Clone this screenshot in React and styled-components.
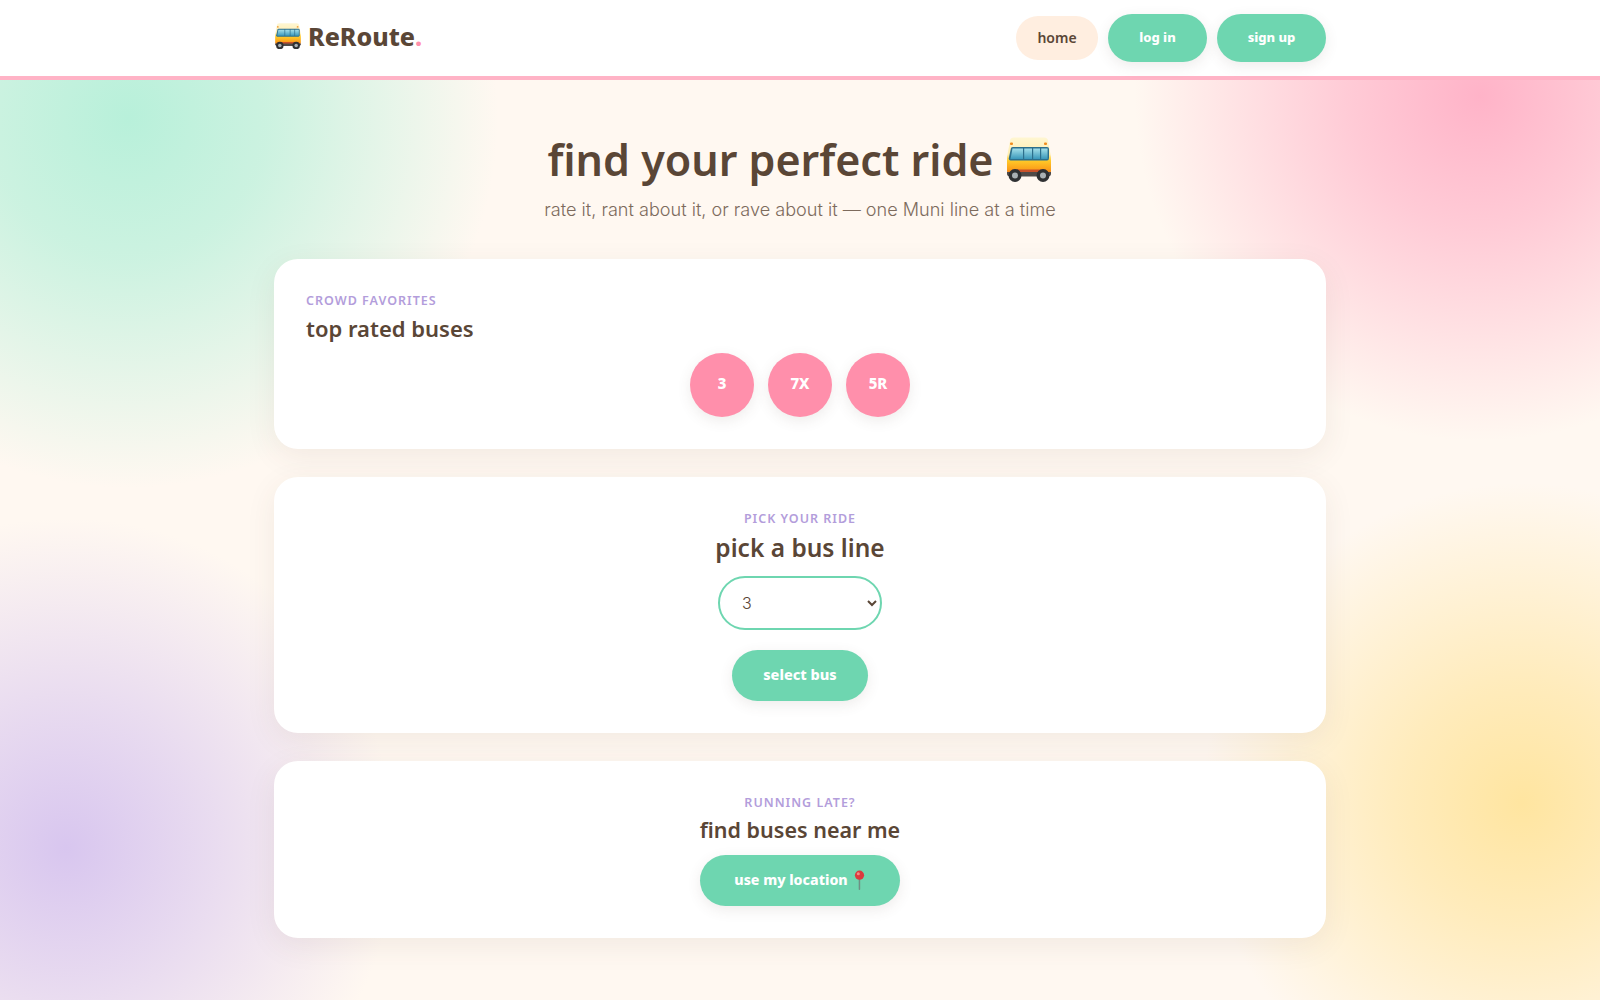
import React, { useId } from "react";
import styled, { createGlobalStyle } from "styled-components";

const Global = createGlobalStyle`
  html, body { margin: 0; padding: 0; }
  body {
    min-height: 1000px;
    font-family: "Noto Sans", sans-serif;
    color: #5a4636;
    background-color: #fff8f1;
    background-image:
      radial-gradient(circle at 128px 118px, #b8f0da 0, rgba(184,240,218,.72) 140px, rgba(184,240,218,0) 370px),
      radial-gradient(circle at 1480px 96px, #ffb3c8 0, rgba(255,179,200,.66) 130px, rgba(255,179,200,0) 345px),
      radial-gradient(circle at 66px 848px, #d8c6ef 0, rgba(216,198,239,.62) 130px, rgba(216,198,239,.34) 220px, rgba(216,198,239,0) 330px),
      radial-gradient(circle at 1522px 803px, #ffe5a0 0, rgba(255,229,160,.66) 120px, rgba(255,229,160,.36) 210px, rgba(255,229,160,0) 320px);
  }
`;

const Header = styled.header`
  height: 76px;
  background: #fff;
  border-bottom: 4px solid #ffb3c6;
  display: flex;
  justify-content: center;
`;
const HeaderInner = styled.div`
  width: 1052px;
  display: flex;
  align-items: center;
  justify-content: space-between;
`;
const Logo = styled.div`
  font-size: 25px;
  font-weight: 800;
  color: #5a4636;
  display: flex;
  align-items: center;
  gap: 6px;
  margin-top: -4px;
`;
const Dot = styled.span`color: #ff8fab;`;
const Nav = styled.nav`
  display: flex;
  align-items: center;
  gap: 10px;
`;
const HomeLink = styled.a`
  height: 44px;
  width: 82px;
  border-radius: 22px;
  background: #ffeee0;
  color: #5a4636;
  font-size: 14px;
  font-weight: 600;
  padding-bottom: 1px;
  box-sizing: border-box;
  display: flex;
  align-items: center;
  justify-content: center;
`;
const Pill = styled.button`
  border: 0;
  padding: 0 0 3px;
  background: #6ed6b0;
  color: #fff;
  font-family: inherit;
  font-weight: 800;
  border-radius: 999px;
  box-shadow: 0 4px 14px rgba(90, 70, 54, 0.1);
  font-size: ${p => p.$size || 14.5}px;
  width: ${p => p.$w}px;
  height: ${p => p.$h}px;
  display: flex;
  align-items: center;
  justify-content: center;
  gap: 5px;
`;
const Main = styled.main`
  width: 1052px;
  margin: 0 auto;
  padding-top: 46px;
  display: flex;
  flex-direction: column;
`;
const Hero = styled.div`
  text-align: center;
  margin-bottom: 37px;
`;
const Title = styled.h1`
  margin: 0;
  padding-top: 2px;
  font-size: 43px;
  line-height: 64px;
  font-weight: 600;
  color: #5a4636;
  display: flex;
  align-items: center;
  justify-content: center;
  gap: 11px;
`;
const Sub = styled.p`
  margin: 4px 0 0;
  font-family: "Inter", sans-serif;
  font-weight: 300;
  font-size: 18.1px;
  line-height: 26px;
  color: #7d6b5d;
`;
const Card = styled.section`
  background: #fff;
  border-radius: 24px;
  box-shadow: 0 8px 30px rgba(90, 70, 54, 0.08);
  padding: 32px;
  margin-bottom: 28px;
  text-align: ${p => (p.$left ? "left" : "center")};
  display: flex;
  flex-direction: column;
  align-items: ${p => (p.$left ? "flex-start" : "center")};
`;
const Eyebrow = styled.div`
  font-size: 12.5px;
  line-height: 18px;
  padding-top: 1px;
  font-weight: 600;
  letter-spacing: 1px;
  text-transform: uppercase;
  color: #b39ddb;
`;
const Heading = styled.h2`
  margin: 2px 0 0;
  font-size: 22px;
  line-height: 32px;
  font-weight: 600;
  color: #5a4636;
`;
const LargeHeading = styled(Heading)`
  margin-top: 1px;
  font-size: 24.5px;
  line-height: 38px;
`;
const NearHeading = styled(Heading)`
  font-size: 21.5px;
`;
const Badges = styled.div`
  align-self: stretch;
  display: flex;
  justify-content: center;
  gap: 14px;
  margin-top: 9px;
`;
const Badge = styled.div`
  width: 64px;
  height: 64px;
  border-radius: 50%;
  background: #ff8fab;
  color: #fff;
  font-weight: 800;
  font-size: 15px;
  padding-bottom: 4px;
  box-sizing: border-box;
  display: flex;
  align-items: center;
  justify-content: center;
  box-shadow: 0 4px 14px rgba(90, 70, 54, 0.1);
`;
const Select = styled.select`
  width: 164px;
  height: 54px;
  margin: 9px 0 20px;
  border: 2px solid #6ed6b0;
  border-radius: 27px;
  background: #fff;
  padding: 0 18px;
  font-family: "Inter", sans-serif;
  font-weight: 300;
  font-size: 16px;
  color: #5a4636;
`;
const BusSvg = styled.svg`
  width: ${p => p.$w}px;
  flex: none;
  display: block;
`;
const PinSvg = styled.svg`
  width: 13px;
  height: 20px;
  flex: none;
  margin-top: 2px;
`;
const NearButton = styled(Pill)`
  margin-top: 9px;
  font-size: 14.2px;
`;

function Bus({ w }) {
  const id = useId().replace(/[^a-zA-Z0-9]/g, "");
  return (
    <BusSvg $w={w} viewBox="6 4 48 46" aria-hidden="true">
      <defs>
        <linearGradient id={id + "b"} x1="0" y1="0" x2="0" y2="1">
          <stop offset="0" stopColor="#fff6d2" />
          <stop offset="0.45" stopColor="#ffeeb0" />
          <stop offset="0.62" stopColor="#ffc928" />
          <stop offset="0.85" stopColor="#fb9f1a" />
          <stop offset="1" stopColor="#e8621f" />
        </linearGradient>
        <linearGradient id={id + "g"} x1="0" y1="0" x2="0" y2="1">
          <stop offset="0" stopColor="#a3dfe9" />
          <stop offset="1" stopColor="#3a98bb" />
        </linearGradient>
      </defs>
      <path d="M11 8 Q11 4.5 15 4.5 H45 Q49 4.5 49 8 L52 24 V38 Q52 42 48 42 H12 Q8 42 8 38 V24 Z" fill={`url(#${id}b)`} />
      <path d="M12 15 Q12.5 14 14 14 H48 Q50 14 50 16 V25 Q50 27.5 48 27.5 H11.5 Q9.5 27.5 9.8 25 Z" fill="#2d6f8c" />
      <path d="M13.5 15.5 H24 V26 H11.5 Z M25.2 15.5 H33 V26 H25.2 Z M34.2 15.5 H41 V26 H34.2 Z M42.2 15.5 H48.6 V26 H42.2 Z" fill={`url(#${id}g)`} />
      <rect x="11" y="9.5" width="3" height="2.4" rx="1" fill="#f08c1e" />
      <rect x="45" y="9.5" width="3" height="2.4" rx="1" fill="#f08c1e" />
      <rect x="12" y="36.5" width="36" height="6" rx="2" fill="#c9522a" />
      <path d="M8 39 H52 V41 Q52 43.5 48 43.5 H12 Q8 43.5 8 41 Z" fill="#4f4a48" />
      <circle cx="16" cy="42.5" r="6.5" fill="#2f3133" />
      <circle cx="16" cy="42.5" r="3" fill="#a9b0b3" />
      <circle cx="44" cy="42.5" r="6.5" fill="#2f3133" />
      <circle cx="44" cy="42.5" r="3" fill="#a9b0b3" />
    </BusSvg>
  );
}

function Pin() {
  return (
    <PinSvg viewBox="0 0 13 20" aria-hidden="true">
      <rect x="5.7" y="7" width="1.5" height="13" rx="0.7" fill="#6f8f84" />
      <circle cx="6.5" cy="5.2" r="4.6" fill="#dc3a3f" />
      <circle cx="5.3" cy="3.8" r="1.5" fill="#f58a86" />
    </PinSvg>
  );
}

export default function App() {
  return (
    <>
      <Global />
      <Header>
        <HeaderInner>
          <Logo><Bus w={28} /> <span>ReRoute<Dot>.</Dot></span></Logo>
          <Nav>
            <HomeLink>home</HomeLink>
            <Pill $w={99} $h={48} $size={13}>log in</Pill>
            <Pill $w={109} $h={48} $size={13}>sign up</Pill>
          </Nav>
        </HeaderInner>
      </Header>
      <Main>
        <Hero>
          <Title>find your perfect ride <Bus w={48} /></Title>
          <Sub>rate it, rant about it, or rave about it — one Muni line at a time</Sub>
        </Hero>
        <Card $left>
          <Eyebrow>crowd favorites</Eyebrow>
          <Heading>top rated buses</Heading>
          <Badges>
            <Badge>3</Badge>
            <Badge>7X</Badge>
            <Badge>5R</Badge>
          </Badges>
        </Card>
        <Card>
          <Eyebrow>pick your ride</Eyebrow>
          <LargeHeading>pick a bus line</LargeHeading>
          <Select defaultValue="3">
            <option>3</option>
            <option>7X</option>
            <option>5R</option>
          </Select>
          <Pill $w={136} $h={51}>select bus</Pill>
        </Card>
        <Card>
          <Eyebrow>running late?</Eyebrow>
          <NearHeading>find buses near me</NearHeading>
          <NearButton $w={200} $h={51}>use my location <Pin /></NearButton>
        </Card>
      </Main>
    </>
  );
}
